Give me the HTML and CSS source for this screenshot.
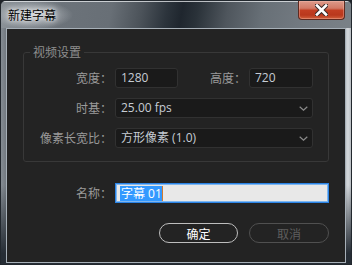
FILE: index.html
```html
<!DOCTYPE html>
<html lang="zh-CN">
<head>
<meta charset="utf-8">
<title>新建字幕</title>
<link rel="stylesheet" href="styles.css">
</head>
<body>
<div class="window">
  <div class="titlebar">
    <span class="title">新建字幕</span>
    <div class="close">
      <svg width="13" height="12" viewBox="0 0 13 12">
        <path d="M2 1.5 L11 10.5 M11 1.5 L2 10.5" stroke="#3a2a28" stroke-width="4.6" stroke-linecap="square" fill="none"/>
        <path d="M2 1.5 L11 10.5 M11 1.5 L2 10.5" stroke="#ffffff" stroke-width="2.6" stroke-linecap="square" fill="none"/>
      </svg>
    </div>
  </div>
  <div class="client">
    <fieldset class="group">
      <legend class="legend">视频设置</legend>
      <div class="row">
        <span class="lbl">宽度：</span>
        <div class="field w1">1280</div>
        <span class="lbl lbl2">高度：</span>
        <div class="field w2">720</div>
      </div>
      <div class="row">
        <span class="lbl">时基：</span>
        <div class="field select">
          <span>25.00 fps</span>
          <svg class="chev" width="9" height="5" viewBox="0 0 9 5"><path d="M0.7 0.7 L4.5 4.2 L8.3 0.7" stroke="#8a8a8a" stroke-width="1.2" fill="none"/></svg>
        </div>
      </div>
      <div class="row">
        <span class="lbl">像素长宽比：</span>
        <div class="field select">
          <span>方形像素 (1.0)</span>
          <svg class="chev" width="9" height="5" viewBox="0 0 9 5"><path d="M0.7 0.7 L4.5 4.2 L8.3 0.7" stroke="#8a8a8a" stroke-width="1.2" fill="none"/></svg>
        </div>
      </div>
    </fieldset>
    <div class="name-row">
      <span class="lbl">名称：</span>
      <div class="name-input"><span class="sel">字幕 01</span></div>
    </div>
    <div class="buttons">
      <div class="btn btn-ok">确定</div>
      <div class="btn btn-cancel">取消</div>
    </div>
  </div>
</div>
</body>
</html>
```
FILE: styles.css
```css
html, body {
  margin: 0;
  padding: 0;
  background: #1e2329;
}
body {
  font-family: "Open Sans", "Noto Sans CJK SC", sans-serif;
  font-size: 12px;
}
.window {
  width: 352px;
  height: 265px;
  box-sizing: border-box;
  border: 1px solid #22282e;
  border-radius: 6px 6px 0 0;
  display: flex;
  flex-direction: column;
  overflow: hidden;
  background:
    linear-gradient(to bottom, rgba(38,45,53,0) 0, rgba(38,45,53,0) 70%, rgba(38,45,53,1) 96%),
    linear-gradient(to right, #858c93 0, #6f767d 6px, #6f767d 336px, #d4d8dc 347px, #aeb3b8 351px);
}
.titlebar {
  height: 27px;
  flex: none;
  display: flex;
  align-items: flex-start;
  padding-left: 7px;
  box-shadow: inset 0 1px 0 rgba(235,238,240,0.75);
  background:
    radial-gradient(ellipse 40px 14px at 32px 14px, rgba(210,214,218,0.85), rgba(210,214,218,0) 100%),
    linear-gradient(100deg, #8d949a 0, #6c737a 60px, #686f76 110px, #4c535a 140px, #2c343c 165px, #1f262e 180px, #2a3239 195px, #4f565d 225px, #687077 260px, #737a81 300px, #7a8187 352px);
}
.title {
  line-height: 27px;
  color: #000;
  font-family: "Noto Sans CJK SC", sans-serif;
  font-size: 12px;
  text-shadow: 0 0 4px rgba(255,255,255,0.9), 0 0 8px rgba(255,255,255,0.7);
}
.close {
  margin-left: auto;
  margin-right: 6px;
  width: 47px;
  height: 19px;
  box-sizing: border-box;
  border: 1px solid #5e2a20;
  border-top: none;
  border-radius: 0 0 4px 4px;
  display: flex;
  align-items: center;
  justify-content: center;
  background: linear-gradient(to bottom, #dd9a8a 0, #d27a66 40%, #c23e22 52%, #b9381d 78%, #d0603c 100%);
  box-shadow: inset 0 0 0 1px rgba(255,200,190,0.35);
}
.client {
  flex: 1;
  margin: 0 5px 1px 5px;
  border: 1px solid #a7b0b8;
  background: #232323;
  display: flex;
  flex-direction: column;
}
.group {
  margin: 15px 16px 0 16px;
  padding: 8px 15px 13px 0;
  border: 1px solid #383838;
  border-radius: 3px;
  min-width: 0;
}
.legend {
  margin-left: 6px;
  padding: 0 3px;
  line-height: 16px;
  color: #8e8e8e;
  font-family: "Noto Sans CJK SC", sans-serif;
}
.row {
  display: flex;
  align-items: center;
  height: 20px;
  margin-bottom: 10px;
}
.row:last-child {
  margin-bottom: 0;
}
.lbl {
  width: 88px;
  flex: none;
  text-align: right;
  margin-right: 3px;
  color: #9a9a9a;
  font-family: "Noto Sans CJK SC", sans-serif;
  line-height: 20px;
  white-space: nowrap;
}
.lbl2 {
  width: 68px;
}
.field {
  height: 20px;
  box-sizing: border-box;
  border: 1px solid #313131;
  border-radius: 3px;
  background: #1a1a1a;
  color: #c6ccd4;
  padding-left: 5px;
  line-height: 18px;
  display: flex;
  align-items: center;
}
.w1 { width: 63px; flex: none; }
.w2 { width: 64px; flex: none; }
.select {
  flex: 1;
  justify-content: space-between;
  padding-right: 4px;
}
.chev {
  display: block;
}
.name-row {
  display: flex;
  align-items: center;
  height: 20px;
  margin-top: 21px;
  padding-left: 17px;
}
.name-input {
  width: 214px;
  height: 20px;
  box-sizing: border-box;
  border: 1px solid #2b84e6;
  box-shadow: inset 0 0 0 1px #7fb6ee;
  background: #e8e8e8;
  padding: 2px 0 0 4px;
  display: flex;
  align-items: flex-start;
}
.sel {
  background: #3399ff;
  color: #ffffff;
  line-height: 15px;
  height: 15px;
  padding: 0 0 0 1px;
  border-right: 1px solid #d07a30;
  font-family: "Open Sans", "Noto Sans CJK SC", sans-serif;
}
.buttons {
  display: flex;
  justify-content: flex-end;
  gap: 11px;
  margin-top: 20px;
  padding-right: 16px;
}
.btn {
  height: 20px;
  box-sizing: border-box;
  border-radius: 10px;
  display: flex;
  align-items: center;
  justify-content: center;
  font-family: "Noto Sans CJK SC", sans-serif;
  font-size: 12px;
}
.btn-ok {
  width: 79px;
  border: 1px solid #bdbdbd;
  color: #ffffff;
}
.btn-cancel {
  width: 80px;
  border: 1px solid #505050;
  color: #5e5e5e;
}
```
